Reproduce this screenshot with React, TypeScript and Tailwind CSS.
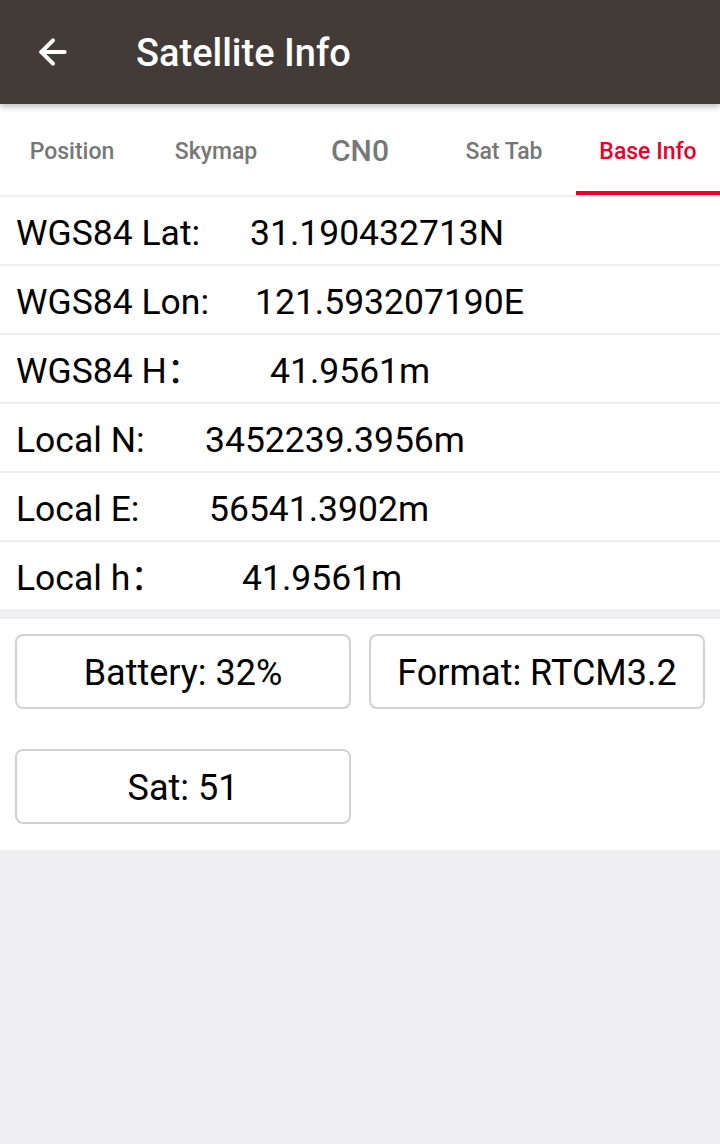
import { ArrowLeft } from "lucide-react";

const tabs = ["Position", "Skymap", "CN0", "Sat Tab", "Base Info"];

const rows: { label: string; value: string; labelWidth: string }[] = [
  { label: "WGS84 Lat:", value: "31.190432713N", labelWidth: "w-[234px]" },
  { label: "WGS84 Lon:", value: "121.593207190E", labelWidth: "w-[239px]" },
  { label: "WGS84 H：", value: "41.9561m", labelWidth: "w-[254px]" },
  { label: "Local N:", value: "3452239.3956m", labelWidth: "w-[189px]" },
  { label: "Local E:", value: "56541.3902m", labelWidth: "w-[193px]" },
  { label: "Local h：", value: "41.9561m", labelWidth: "w-[226px]" },
];

function InfoButton({ text }: { text: string }) {
  return (
    <div className="flex h-[75px] w-[336px] items-center justify-center rounded-lg border-2 border-[#d2d2d2] bg-white pt-[3px] text-[36px] text-black">
      {text}
    </div>
  );
}

export default function App() {
  return (
    <div
      className="flex h-[1144px] w-[720px] flex-col bg-[#efeff1]"
      style={{ fontFamily: "Roboto, 'Noto Sans CJK SC', sans-serif" }}
    >
      <header className="relative z-10 flex h-[104px] items-center bg-[#423b38] shadow-[0_3px_6px_rgba(0,0,0,0.25)]">
        <ArrowLeft className="ml-[33px] h-[40px] w-[40px] text-white" strokeWidth={2.4} />
        <h1 className="ml-[63px] pt-[2px] text-[38px] font-medium text-white">Satellite Info</h1>
      </header>

      <nav className="flex h-[93px] border-b-2 border-[#eeeeee] bg-white">
        {tabs.map((t) => {
          const active = t === "Base Info";
          return (
            <div
              key={t}
              className={
                "flex flex-1 items-center justify-center border-b-4 font-medium " +
                (active ? "border-[#e4002b] text-[#e4002b]" : "border-transparent text-[#777777]") +
                (t === "CN0" ? " pt-[6px] text-[30px]" : " pt-[10px] text-[23px]")
              }
            >
              {t}
            </div>
          );
        })}
      </nav>

      <div className="bg-white">
        {rows.map((r, i) => (
          <div
            key={r.label}
            className={
              "flex items-center whitespace-nowrap pl-[16px] pt-[7px] text-[35.5px] text-black " +
              (i < rows.length - 1 ? "h-[69px] border-b-2 border-[#eeeeee]" : "h-[67px]")
            }
          >
            <span className={"shrink-0 " + r.labelWidth}>{r.label}</span>
            <span>{r.value}</span>
          </div>
        ))}
      </div>

      <div className="mt-[10px] flex flex-col gap-[40px] bg-white px-[15px] pb-[26px] pt-[15px]">
        <div className="flex gap-[18px]">
          <InfoButton text="Battery: 32%" />
          <InfoButton text="Format: RTCM3.2" />
        </div>
        <div className="flex">
          <InfoButton text="Sat: 51" />
        </div>
      </div>
    </div>
  );
}
